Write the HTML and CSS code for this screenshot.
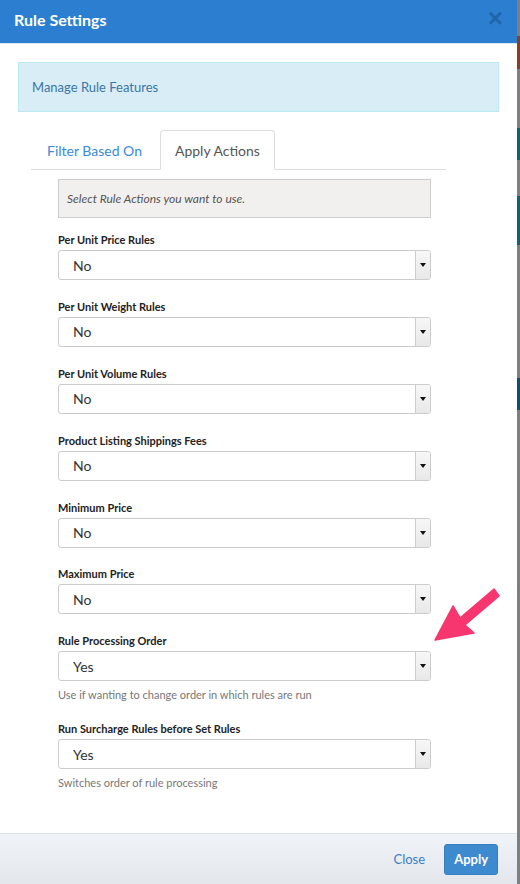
FILE: index.html
```html
<!DOCTYPE html>
<html lang="en">
<head>
    <meta charset="UTF-8">
    <meta name="viewport" content="width=device-width, initial-scale=1.0">
    <title>Rule Settings</title>
    <link rel="stylesheet" href="styles.css">
</head>
<body>
    <div class="modal">
        <div class="modal-header">
            <h4 class="modal-title">Rule Settings</h4>
            <button class="close" type="button" aria-label="Close">&times;</button>
        </div>

        <div class="modal-body">
            <div class="alert">Manage Rule Features</div>

            <ul class="nav-tabs">
                <li><a href="#">Filter Based On</a></li>
                <li class="active"><a href="#">Apply Actions</a></li>
            </ul>

            <div class="tab-pane">
                <div class="well">Select Rule Actions you want to use.</div>

                <div class="form-group">
                    <label>Per Unit Price Rules</label>
                    <div class="select"><span>No</span><i class="caret-btn"></i></div>
                </div>

                <div class="form-group">
                    <label>Per Unit Weight Rules</label>
                    <div class="select"><span>No</span><i class="caret-btn"></i></div>
                </div>

                <div class="form-group">
                    <label>Per Unit Volume Rules</label>
                    <div class="select"><span>No</span><i class="caret-btn"></i></div>
                </div>

                <div class="form-group">
                    <label>Product Listing Shippings Fees</label>
                    <div class="select"><span>No</span><i class="caret-btn"></i></div>
                </div>

                <div class="form-group">
                    <label>Minimum Price</label>
                    <div class="select"><span>No</span><i class="caret-btn"></i></div>
                </div>

                <div class="form-group">
                    <label>Maximum Price</label>
                    <div class="select"><span>No</span><i class="caret-btn"></i></div>
                </div>

                <div class="form-group">
                    <label>Rule Processing Order</label>
                    <div class="select"><span>Yes</span><i class="caret-btn"></i></div>
                    <p class="help-block">Use if wanting to change order in which rules are run</p>
                </div>

                <div class="form-group">
                    <label>Run Surcharge Rules before Set Rules</label>
                    <div class="select"><span>Yes</span><i class="caret-btn"></i></div>
                    <p class="help-block">Switches order of rule processing</p>
                </div>
            </div>
        </div>

        <div class="modal-footer">
            <a href="#" class="btn-link">Close</a>
            <button type="button" class="btn-primary">Apply</button>
        </div>

        <!-- annotation arrow -->
        <svg class="arrow" width="80" height="70" viewBox="0 0 80 70">
            <path d="M5 55 L23 21 L30 33 L64 4 L69 11 L35 40 L44 48 Z" fill="#f7366f" stroke="#f7366f" stroke-width="1.5" stroke-linejoin="round"/>
        </svg>
    </div>
</body>
</html>
```

FILE: styles.css
```css
* {
    box-sizing: border-box;
}

body {
    margin: 0;
    font-family: Lato, "Open Sans", "Liberation Sans", sans-serif;
    color: #333;
    background: linear-gradient(to bottom,
        #7f7f7f 0, #7f7f7f 36px,
        #8a3f22 36px, #8a3f22 69px,
        #7f7f7f 69px, #7f7f7f 128px,
        #125f7a 128px, #125f7a 160px,
        #7f7f7f 160px, #7f7f7f 196px,
        #125f7a 196px, #125f7a 245px,
        #7f7f7f 245px, #7f7f7f 378px,
        #0f4e6e 378px, #0f4e6e 410px,
        #7f7f7f 410px);
    height: 884px;
    overflow: hidden;
}

.modal {
    position: relative;
    width: 517px;
    height: 884px;
    background: #fff;
    display: flex;
    flex-direction: column;
}

.modal-header {
    height: 44px;
    background-color: #2c7fd0;
    border-bottom: 1px solid #d9e7f4;
    display: flex;
    align-items: center;
    justify-content: space-between;
    padding: 0 14px 4px 14px;
}

.modal-title {
    margin: 0;
    color: #fff;
    font-size: 16px;
    font-weight: 700;
}

.close {
    background: none;
    border: none;
    padding: 0;
    color: #1d5c9c;
    opacity: 0.75;
    font-size: 26px;
    font-weight: 700;
    line-height: 1;
    font-family: "Liberation Sans", sans-serif;
    margin-top: -4px;
}

.modal-body {
    flex: 1;
    padding: 18px 18px 0 18px;
}

.alert {
    height: 50px;
    display: flex;
    align-items: center;
    padding: 0 13px;
    background-color: #d9edf7;
    border: 1px solid #bce8f1;
    color: #3b77a4;
    font-size: 13px;
}

.nav-tabs {
    list-style: none;
    margin: 18px 53px 0 13px;
    padding: 0;
    display: flex;
    border-bottom: 1px solid #ddd;
}

.nav-tabs li {
    margin-right: 2px;
    margin-bottom: -1px;
}

.nav-tabs a {
    display: block;
    height: 40px;
    line-height: 40px;
    padding: 0 15px;
    font-size: 14px;
    color: #3a8ad6;
    text-decoration: none;
    border: 1px solid transparent;
    border-radius: 4px 4px 0 0;
}

.nav-tabs .active a {
    color: #555;
    background: #fff;
    border-color: #ddd #ddd transparent #ddd;
    padding: 0 14px;
}

.tab-pane {
    margin: 0 68px 0 40px;
    padding-top: 9px;
}

.well {
    height: 39px;
    display: flex;
    align-items: center;
    padding: 0 8px;
    background-color: #f1f0ef;
    border: 1px solid #ccc;
    font-size: 12px;
    font-style: italic;
    color: #555;
    margin-bottom: 14px;
}

.form-group {
    margin-bottom: 18.9px;
}

.form-group label {
    display: block;
    font-size: 11px;
    font-weight: 700;
    line-height: 15px;
    margin-bottom: 3px;
    color: #222;
}

.select {
    height: 30px;
    display: flex;
    align-items: center;
    justify-content: space-between;
    border: 1px solid #ccc;
    border-radius: 3px;
    background: #fff;
    font-size: 14px;
    color: #333;
    overflow: hidden;
}

.select span {
    padding-left: 14px;
}

.caret-btn {
    width: 15px;
    height: 100%;
    border-left: 1px solid #ccc;
    background: linear-gradient(to bottom, #f7f7f7, #e8e8e8);
    display: flex;
    align-items: center;
    justify-content: center;
}

.caret-btn::after {
    content: "";
    border-left: 3px solid transparent;
    border-right: 3px solid transparent;
    border-top: 4px solid #111;
}

.help-block {
    margin: 6px 0 0 0;
    font-size: 11px;
    line-height: 15px;
    color: #777;
}

.form-group:last-child {
    margin-bottom: 0;
}

.modal-footer {
    height: 51px;
    border-top: 1px solid #dbe0e6;
    background: linear-gradient(to bottom, #f0f3f7, #e3e6ea);
    display: flex;
    align-items: center;
    justify-content: flex-end;
    padding: 0 19px 0 0;
    gap: 19px;
}

.btn-link {
    color: #3a80c8;
    text-decoration: none;
    font-size: 13px;
}

.btn-primary {
    height: 31px;
    padding: 0 9px;
    background-color: #3d8acf;
    border: 1px solid #357ebd;
    border-radius: 3px;
    color: #fff;
    font-family: inherit;
    font-size: 13px;
    font-weight: 700;
}

.arrow {
    position: absolute;
    left: 430px;
    top: 585px;
}
```
